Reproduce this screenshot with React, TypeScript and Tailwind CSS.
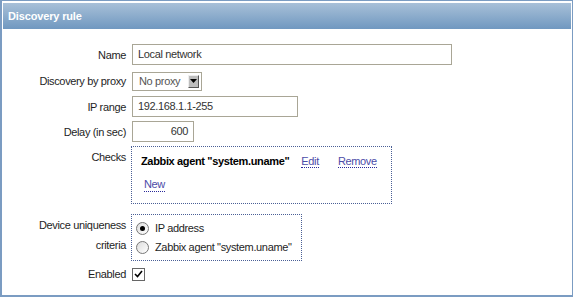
import React from "react";

const inputCls =
  "h-[21px] border border-[#a9a696] bg-white px-[5px] text-[11px] text-[#333] flex items-center whitespace-nowrap";

function Label({ children, className = "" }: { children: React.ReactNode; className?: string }) {
  return (
    <div className={"w-[123px] shrink-0 text-right text-[#1e1e1e] leading-[20px] whitespace-nowrap " + className}>{children}</div>
  );
}

function Link({ children }: { children: React.ReactNode }) {
  return (
    <span className="text-[#4b4ba8] border-b border-dotted border-[#2a2a9a] leading-[13px]">{children}</span>
  );
}

export default function App() {
  return (
    <div
      className="w-[573px] h-[297px] bg-white border-t border-r border-l-2 border-b-2 border-[#7b9cc2] px-[1px] pt-[2px] text-[11px] tracking-[-0.35px]"
      style={{ fontFamily: '"Liberation Sans", Arial, sans-serif' }}
    >
      <div className="h-[26px] bg-gradient-to-b from-[#a8c0d8] to-[#7098c0] flex items-center pl-[5px]">
        <span className="text-white font-bold text-[11px] tracking-[-0.15px]">Discovery rule</span>
      </div>

      {/* Name */}
      <div className="flex items-center mt-[15px]">
        <Label>Name</Label>
        <div className={inputCls + " ml-[6px] w-[320px]"}>Local network</div>
      </div>

      {/* Proxy */}
      <div className="flex items-center mt-[6px]">
        <Label>Discovery by proxy</Label>
        <div className="ml-[6px] w-[70px] h-[19px] border border-[#a9a696] bg-white flex items-center pl-[6px] pr-[2px] text-[#555] whitespace-nowrap">
          <span className="flex-1">No proxy</span>
          <span className="w-[11px] h-[13px] bg-[#bdbdbd] border-r border-b border-[#555] border-t border-l border-t-[#eee] border-l-[#eee] flex items-center justify-center">
            <svg width="7" height="4" viewBox="0 0 7 4">
              <polygon points="0,0 7,0 3.5,4" fill="#000" />
            </svg>
          </span>
        </div>
      </div>

      {/* IP range */}
      <div className="flex items-center mt-[5px]">
        <Label>IP range</Label>
        <div className={inputCls + " ml-[6px] w-[166px]"}>192.168.1.1-255</div>
      </div>

      {/* Delay */}
      <div className="flex items-center mt-[4px]">
        <Label>Delay (in sec)</Label>
        <div className={inputCls + " ml-[6px] w-[62px] justify-end"}>600</div>
      </div>

      {/* Checks */}
      <div className="flex items-start mt-[4px]">
        <Label className="pt-[1px]">Checks</Label>
        <div className="ml-[5px] w-[261px] h-[58px] border border-dotted border-[#4a5f96] pl-[9px] pt-[7px] whitespace-nowrap">
          <div className="flex items-center h-[14px]">
            <span className="font-bold text-black">Zabbix agent "system.uname"</span>
            <span className="ml-[12px]"><Link>Edit</Link></span>
            <span className="ml-[19px]"><Link>Remove</Link></span>
          </div>
          <div className="flex items-center h-[14px] mt-[10px] pl-[3px]">
            <Link>New</Link>
          </div>
        </div>
      </div>

      {/* Device uniqueness */}
      <div className="flex items-start mt-[10px]">
        <Label className="pt-[1px]">
          <div>Device uniqueness</div>
          <div>criteria</div>
        </Label>
        <div className="ml-[5px] w-[171px] h-[47px] border border-dotted border-[#4a5f96] pl-[4px] pt-[5px] text-[#1e1e1e] whitespace-nowrap">
          <div className="flex items-center h-[17px]">
            <span className="w-[13px] h-[13px] shrink-0 rounded-full border border-[#777] bg-gradient-to-br from-[#ddd] to-white flex items-center justify-center">
              <span className="w-[5px] h-[5px] rounded-full bg-black" />
            </span>
            <span className="ml-[6px]">IP address</span>
          </div>
          <div className="flex items-center h-[17px] mt-[2px]">
            <span className="w-[13px] h-[13px] shrink-0 rounded-full border border-[#777] bg-gradient-to-br from-[#ddd] to-white" />
            <span className="ml-[6px]">Zabbix agent "system.uname"</span>
          </div>
        </div>
      </div>

      {/* Enabled */}
      <div className="flex items-center mt-[3px]">
        <Label>Enabled</Label>
        <div className="ml-[6px] w-[13px] h-[13px] border border-[#666] bg-white flex items-center justify-center">
          <svg width="9" height="8" viewBox="0 0 9 8">
            <path d="M1 4 L3.5 6.5 L8 1" stroke="#000" strokeWidth="1.6" fill="none" />
          </svg>
        </div>
      </div>
    </div>
  );
}
